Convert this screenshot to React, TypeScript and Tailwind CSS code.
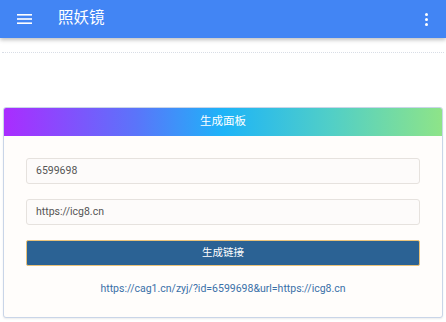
import React from 'react';

const App: React.FC = () => {
  return (
    <div className="w-[446px] h-[322px] bg-white overflow-hidden" style={{ fontFamily: '"Roboto", "Noto Sans CJK SC", sans-serif' }}>
      {/* Top bar */}
      <div className="h-[38px] bg-[#4285f4] flex items-center px-[17px] shadow-[0_2px_4px_rgba(0,0,0,0.25)] relative z-10">
        <svg width="15" height="12" viewBox="0 0 15 12" className="text-white">
          <rect x="0" y="1" width="15" height="1.6" fill="currentColor" />
          <rect x="0" y="5.2" width="15" height="1.6" fill="currentColor" />
          <rect x="0" y="9.4" width="15" height="1.6" fill="currentColor" />
        </svg>
        <span className="ml-[26px] text-white text-[15.5px] leading-none">照妖镜</span>
        <div className="ml-auto flex flex-col gap-[2px] mr-[1px]">
          <span className="w-[3px] h-[3px] rounded-full bg-white" />
          <span className="w-[3px] h-[3px] rounded-full bg-white" />
          <span className="w-[3px] h-[3px] rounded-full bg-white" />
        </div>
      </div>

      <div className="mt-[14px] mx-[2px] border-t border-dotted border-[#d8dde6]" />

      {/* Panel */}
      <div className="mt-[54px] mx-[3px] rounded-[3px] border border-[#c9d5e8] bg-[#fffdfb] shadow-[0_1px_2px_rgba(0,0,0,0.08)] overflow-hidden">
        <div className="h-[28px] flex items-center justify-center text-white text-[11.5px] bg-[linear-gradient(to_right,#aa2cff,#5b74fa_30%,#1db4f8_50%,#52cfc6_75%,#8ee488)]">
          生成面板
        </div>
        <div className="px-[22px] pt-[22px] pb-[20px] flex flex-col">
          <div className="h-[26px] rounded-[3px] border border-[#e6e2de] bg-[#fdfbfa] flex items-center px-[9px] text-[10.5px] text-[#555]">
            6599698
          </div>
          <div className="mt-[15px] h-[26px] rounded-[3px] border border-[#e6e2de] bg-[#fdfbfa] flex items-center px-[9px] text-[10.5px] text-[#555]">
            https://icg8.cn
          </div>
          <button className="mt-[15px] h-[26px] rounded-[2px] border border-[#e9c27a] bg-[#2b6294] text-white text-[10.5px] flex items-center justify-center">
            生成链接
          </button>
          <div className="mt-[15px] text-center text-[10.5px] text-[#3a70a8]">
            https://cag1.cn/zyj/?id=6599698&amp;url=https://icg8.cn
          </div>
        </div>
      </div>
    </div>
  );
};

export default App;
